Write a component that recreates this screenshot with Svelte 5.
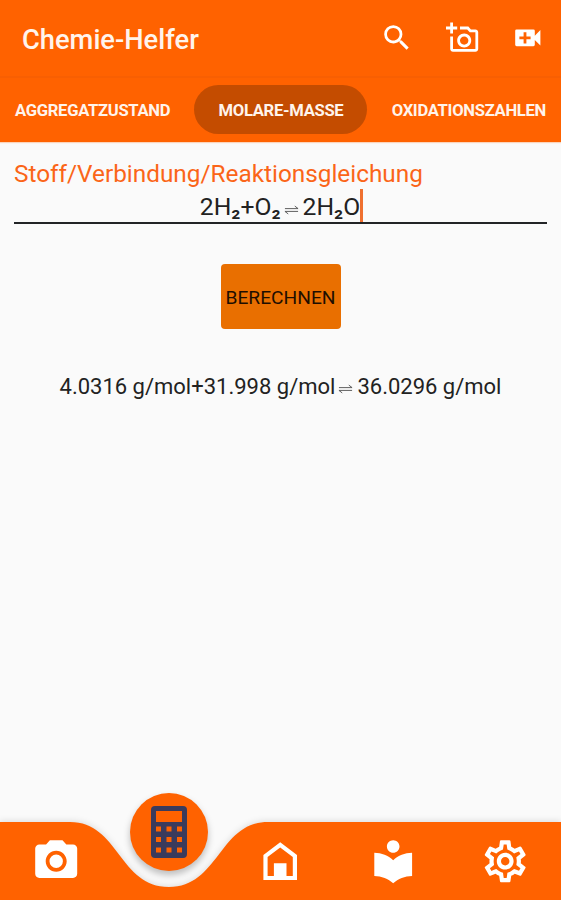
<script lang="ts">
	const actions = [
		{
			label: 'Suchen',
			path: 'M15.5 14h-.79l-.28-.27A6.47 6.47 0 0 0 16 9.5 6.5 6.5 0 1 0 9.5 16c1.61 0 3.09-.59 4.23-1.57l.27.28v.79l5 4.99L20.49 19l-4.99-5zm-6 0C7.01 14 5 11.99 5 9.5S7.01 5 9.5 5 14 7.01 14 9.5 11.99 14 9.5 14z'
		},
		{
			label: 'Foto hinzufügen',
			path: 'M21 6h-3.17L16 4h-6v2h5.12l1.83 2H21v12H5v-9H3v9c0 1.1.9 2 2 2h16c1.1 0 2-.9 2-2V8c0-1.1-.9-2-2-2zM8 14c0 2.76 2.24 5 5 5s5-2.24 5-5-2.24-5-5-5-5 2.24-5 5zm5-3c1.65 0 3 1.35 3 3s-1.35 3-3 3-3-1.35-3-3 1.35-3 3-3zM5 6h3V4H5V1H3v3H0v2h3v3h2z'
		},
		{
			label: 'Video hinzufügen',
			path: 'M17 10.5V7a1 1 0 0 0-1-1H4a1 1 0 0 0-1 1v10a1 1 0 0 0 1 1h12a1 1 0 0 0 1-1v-3.5l4 4v-11l-4 4zM14 13h-3v3H9v-3H6v-2h3V8h2v3h3v2z'
		}
	];

	const tabs = ['Aggregatzustand', 'Molare-Masse', 'Oxidationszahlen'];

	const nav = [
		{
			label: 'Kamera',
			path: 'M9 2 7.17 4H4c-1.1 0-2 .9-2 2v12c0 1.1.9 2 2 2h16c1.1 0 2-.9 2-2V6c0-1.1-.9-2-2-2h-3.17L15 2H9zm3 15c-2.76 0-5-2.24-5-5s2.24-5 5-5 5 2.24 5 5-2.24 5-5 5zM12 8.8a3.2 3.2 0 1 0 0 6.4 3.2 3.2 0 0 0 0-6.4z'
		},
		{ label: 'Rechner', path: '' },
		{
			label: 'Start',
			path: 'M12 3 4 9v12h16V9l-8-6zm6 16h-3v-6H9v6H6v-9l6-4.5 6 4.5v9z'
		},
		{
			label: 'Bibliothek',
			path: 'M12 11.55C9.64 9.35 6.48 8 3 8v11c3.48 0 6.64 1.35 9 3.55 2.36-2.19 5.52-3.55 9-3.55V8c-3.48 0-6.64 1.35-9 3.55zM12 8c1.66 0 3-1.34 3-3s-1.34-3-3-3-3 1.34-3 3 1.34 3 3 3z'
		},
		{
			label: 'Einstellungen',
			path: 'M19.43 12.98c.04-.32.07-.64.07-.98s-.03-.66-.07-.98l2.11-1.65c.19-.15.24-.42.12-.64l-2-3.46c-.09-.16-.26-.25-.44-.25-.06 0-.12.01-.17.03l-2.49 1c-.52-.4-1.08-.73-1.69-.98l-.38-2.65C14.46 2.18 14.25 2 14 2h-4c-.25 0-.46.18-.49.42l-.38 2.65c-.61.25-1.17.59-1.69.98l-2.49-1c-.06-.02-.12-.03-.18-.03-.17 0-.34.09-.43.25l-2 3.46c-.13.22-.07.49.12.64l2.11 1.65c-.04.32-.07.65-.07.98s.03.66.07.98l-2.11 1.65c-.19.15-.24.42-.12.64l2 3.46c.09.16.26.25.44.25.06 0 .12-.01.17-.03l2.49-1c.52.4 1.08.73 1.69.98l.38 2.65c.03.24.24.42.49.42h4c.25 0 .46-.18.49-.42l.38-2.65c.61-.25 1.17-.59 1.69-.98l2.49 1c.06.02.12.03.18.03.17 0 .34-.09.43-.25l2-3.46c.12-.22.07-.49-.12-.64l-2.11-1.65zm-1.98-1.71c.04.31.05.52.05.73s-.02.43-.05.73l-.14 1.13.89.7 1.08.84-.7 1.21-1.27-.51-1.04-.42-.9.68c-.43.32-.84.56-1.25.73l-1.06.43-.16 1.13-.2 1.35h-1.4l-.19-1.35-.16-1.13-1.06-.43c-.43-.18-.83-.41-1.23-.71l-.91-.7-1.06.43-1.27.51-.7-1.21 1.08-.84.89-.7-.14-1.13c-.03-.31-.05-.54-.05-.74s.02-.43.05-.73l.14-1.13-.89-.7-1.08-.84.7-1.21 1.27.51 1.04.42.9-.68c.43-.32.84-.56 1.25-.73l1.06-.43.16-1.13.2-1.35h1.39l.19 1.35.16 1.13 1.06.43c.43.18.83.41 1.23.71l.91.7 1.06-.43 1.27-.51.7 1.21-1.07.85-.89.7.14 1.13zM12 8c-2.21 0-4 1.79-4 4s1.79 4 4 4 4-1.79 4-4-1.79-4-4-4zm0 6c-1.1 0-2-.9-2-2s.9-2 2-2 2 .9 2 2-.9 2-2 2z'
		}
	];

	let active = $state(1);
</script>

{#snippet arrows()}
	<svg class="arrows" viewBox="0 0 16 10" role="img" aria-label="⇌">
		<path d="M1 3.5h14l-3.5-2.7M15 6.5H1l3.5 2.7" />
	</svg>
{/snippet}

<div class="app">
	<header>
		<div class="toolbar">
			<h1>Chemie-Helfer</h1>
			<div class="actions">
				{#each actions as action}
					<button aria-label={action.label}>
						<svg viewBox="0 0 24 24"><path d={action.path} /></svg>
					</button>
				{/each}
			</div>
		</div>
		<div class="tabs">
			{#each tabs as tab, i}
				<button class="tab" class:active={active === i} onclick={() => (active = i)}>
					<span>{tab}</span>
				</button>
			{/each}
		</div>
	</header>

	<main>
		<div class="label"><span>Stoff/Verbindung/Reaktionsgleichung</span></div>
		<div class="field">
			<span class="formula">2H<b>₂</b>+O<b>₂</b>{@render arrows()}2H<b>₂</b>O</span>
			<i class="caret"></i>
		</div>
		<button class="submit"><span>BERECHNEN</span></button>
		<p class="result"><span>4.0316 g/mol+31.998 g/mol{@render arrows()}36.0296 g/mol</span></p>
	</main>

	<nav>
		<svg class="bar" viewBox="0 0 561 78">
			<path d="M0 0H70C119 0 119 65 169 65S219 0 268 0H561V78H0z" />
		</svg>
		{#each nav as item}
			<button class="item" aria-label={item.label}>
				{#if item.path}
					<svg viewBox="0 0 24 24"><path d={item.path} /></svg>
				{:else}
					<span class="fab">
						<svg viewBox="0 0 36 52">
							<rect width="36" height="52" rx="4" />
							<path class="keys" d="M5 5h26v11H5z" />
							{#each [20.5, 31, 41.5] as y}
								{#each [5, 15.5, 26] as x}
									<rect class="keys" {x} {y} width="5" height="5" />
								{/each}
							{/each}
						</svg>
					</span>
				{/if}
			</button>
		{/each}
	</nav>
</div>

<style>
	:global(body) {
		margin: 0;
	}

	.app {
		display: flex;
		flex-direction: column;
		height: 900px;
		overflow: hidden;
		background: #fafafa;
		color: #222;
		font-family: Roboto, 'Liberation Sans', sans-serif;
	}

	button {
		padding: 0;
		border: 0;
		background: none;
		color: inherit;
		font: inherit;
	}

	svg {
		display: block;
		fill: currentColor;
	}

	header {
		height: 142px;
		background: #ff6200;
		color: #fff4ec;
		box-shadow: 0 1px 1px rgba(255, 98, 0, 0.25);
	}

	.toolbar {
		display: flex;
		align-items: center;
		justify-content: space-between;
		height: 78px;
		padding: 0 16px 0 22px;
		box-sizing: border-box;
		border-bottom: 2px solid #f85f02;
	}

	h1 {
		margin: 4px 0 0;
		font-size: 27.3px;
		font-weight: 500;
		line-height: 32px;
	}

	.actions {
		display: flex;
		gap: 32px;
		color: #fff;
	}

	.actions svg {
		width: 33.6px;
		height: 33.6px;
	}

	.tabs {
		display: flex;
		justify-content: space-between;
		height: 49px;
		padding: 7px 15px 0;
	}

	.tab {
		padding-top: 2px;
		font-size: 16.6px;
		font-weight: 700;
		letter-spacing: -0.29px;
		text-transform: uppercase;
		white-space: nowrap;
	}

	.tab.active {
		width: 173px;
		border-radius: 25px;
		background: #c44c00;
	}

	main {
		display: flex;
		flex: 1;
		flex-direction: column;
		align-items: center;
		padding: 17px 14px 0;
	}

	.label {
		align-self: flex-start;
		color: #fb6518;
		font-size: 24.35px;
		line-height: 30px;
	}

	.field {
		display: flex;
		align-items: flex-start;
		justify-content: center;
		width: 100%;
		height: 35px;
		box-sizing: border-box;
		border-bottom: 2px solid #222426;
		font-size: 24.7px;
		line-height: 36px;
	}

	.formula {
		margin-left: 2px;
	}

	.formula b {
		font-weight: 500;
	}

	.caret {
		width: 3px;
		height: 33px;
		background: #ef7030;
	}

	.arrows {
		display: inline-block;
		width: 15px;
		height: 10px;
		margin: 0 4px 0 3px;
		fill: none;
		stroke: #555;
		stroke-width: 1;
	}

	.submit {
		width: 120px;
		height: 65px;
		margin-top: 40px;
		padding-top: 2px;
		border-radius: 4px;
		background: #e96f00;
		color: #1e0e00;
		font-size: 19.2px;
	}

	.result {
		margin: 43px 0 0;
		font-size: 22px;
		line-height: 30px;
		white-space: nowrap;
	}

	nav {
		position: relative;
		display: grid;
		grid-template-columns: repeat(5, 1fr);
		height: 78px;
		color: #fff;
	}

	.bar {
		position: absolute;
		inset: 0;
		width: 100%;
		height: 100%;
		overflow: visible;
		color: #ff6200;
		filter: drop-shadow(0 -1px 3px rgba(0, 0, 0, 0.12));
	}

	.item {
		position: relative;
		display: flex;
		justify-content: center;
		align-items: flex-start;
		padding-top: 14px;
	}

	.item > svg {
		width: 50.4px;
		height: 50.4px;
	}

	.fab {
		display: grid;
		place-items: center;
		width: 78px;
		height: 78px;
		margin: -43.5px 0 0 1px;
		border-radius: 50%;
		background: #ff6200;
		box-shadow: 0 4px 7px rgba(0, 0, 0, 0.25);
	}

	.fab svg {
		width: 36px;
		height: 52px;
		color: #3a3b5c;
	}

	.fab .keys {
		fill: #ff6200;
	}
</style>
